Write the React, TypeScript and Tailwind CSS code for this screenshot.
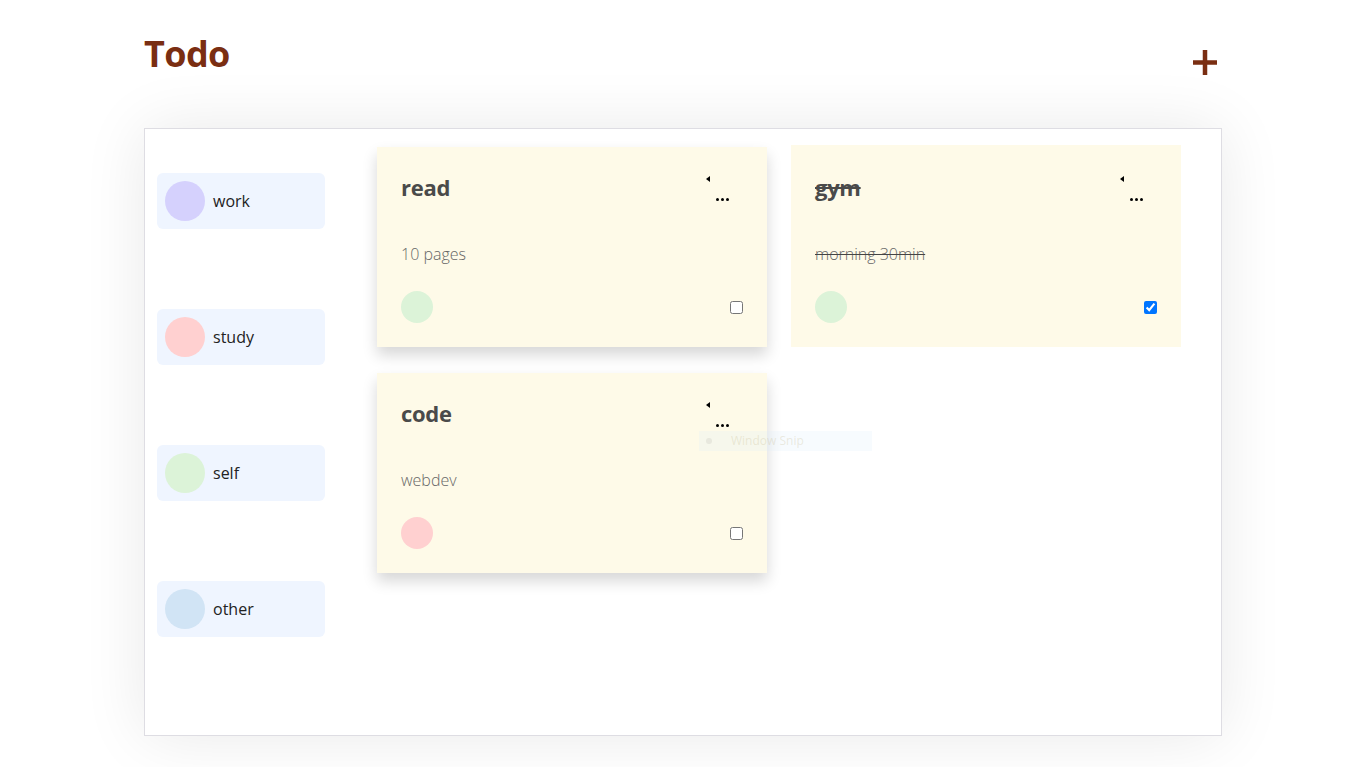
const categories = [
  { name: "work", color: "bg-[#d5d1fd]" },
  { name: "study", color: "bg-[#ffd0d0]" },
  { name: "self", color: "bg-[#dcf3d8]" },
  { name: "other", color: "bg-[#d1e4f5]" },
];

const todos = [
  { title: "read", desc: "10 pages", color: "bg-[#dcf3d8]", done: false, shadow: true },
  { title: "gym", desc: "morning 30min", color: "bg-[#dcf3d8]", done: true, shadow: false },
  { title: "code", desc: "webdev", color: "bg-[#ffd0d0]", done: false, shadow: true },
];

const PlusIcon = () => (
  <svg width="24" height="25" viewBox="0 0 24 25">
    <rect x="0" y="10.25" width="24" height="4.5" fill="#7a2e12" />
    <rect x="9.75" y="0" width="4.5" height="25" fill="#7a2e12" />
  </svg>
);

const MenuToggle = () => (
  <div className="relative w-[30px] h-[30px]">
    <span className="absolute left-[1px] top-[5px] w-0 h-0 border-y-[3.5px] border-y-transparent border-r-[4px] border-r-black" />
    <span className="absolute left-[11px] top-[27px] flex gap-[2.5px]">
      <span className="w-[2.5px] h-[2.5px] rounded-full bg-black" />
      <span className="w-[2.5px] h-[2.5px] rounded-full bg-black" />
      <span className="w-[2.5px] h-[2.5px] rounded-full bg-black" />
    </span>
  </div>
);

const TodoCard = ({ todo, index }: { todo: (typeof todos)[number]; index: number }) => {
  const isTall = index === 1;
  return (
    <div
      className={`w-[390px] bg-[#fefae8] px-6 flex flex-col ${
        isTall ? "h-[202px] pt-[26px]" : "h-[200px] mt-[2px] pt-6"
      } ${todo.shadow ? "shadow-[0_8px_14px_rgba(0,0,0,0.16)]" : ""}`}
    >
      <div className="flex justify-between items-start h-8">
        <h3
          className={`text-[22px] leading-8 font-bold text-[#4a4a4a] tracking-[-0.3px] ${
            todo.done ? "line-through" : ""
          }`}
        >
          {todo.title}
        </h3>
        <div className="mr-[8px]">
          <MenuToggle />
        </div>
      </div>
      <p
        className={`mt-[39px] text-base leading-6 font-light text-[#666] ${
          todo.done ? "line-through decoration-[#444]" : ""
        }`}
      >
        {todo.desc}
      </p>
      <div className="mt-[25px] flex items-center justify-between">
        <div className={`w-8 h-8 rounded-full ${todo.color}`} />
        <input
          type="checkbox"
          readOnly
          checked={todo.done}
          className="w-[13px] h-[13px] m-0"
        />
      </div>
    </div>
  );
};

const App = () => {
  return (
    <div
      className="min-h-[767px] bg-white"
      style={{ fontFamily: '"Open Sans", "Noto Sans", sans-serif' }}
    >
      <div className="w-[1078px] mx-auto">
        <header className="flex justify-between items-start pt-[36px] h-[128px]">
          <h1 className="text-[36px] leading-[36px] font-bold text-[#7a2e12] tracking-[-0.6px]">Todo</h1>
          <div className="mt-[14px] mr-[5px]">
            <PlusIcon />
          </div>
        </header>

        <div className="relative h-[608px] border border-[#dedde3] bg-white shadow-[0_0_60px_rgba(0,0,0,0.09)] flex">
          <aside className="w-[168px] ml-3 mt-[44px] flex flex-col gap-20">
            {categories.map((cat) => (
              <div
                key={cat.name}
                className="h-14 rounded-md bg-[#eff5ff] flex items-center gap-2 px-2"
              >
                <div className={`w-10 h-10 rounded-full ${cat.color}`} />
                <span className="text-base text-[#222]">{cat.name}</span>
              </div>
            ))}
          </aside>

          <main className="ml-[52px] mt-4 grid grid-cols-[390px_390px] gap-6 content-start items-start">
            {todos.map((todo, i) => (
              <TodoCard key={todo.title} todo={todo} index={i} />
            ))}
          </main>

          <div className="absolute left-[554px] top-[302px] w-[173px] h-[20px] bg-[rgba(220,238,252,0.22)] flex items-center">
            <span className="ml-[7px] w-[6px] h-[6px] rounded-full bg-[rgba(200,200,190,0.3)]" />
            <span className="ml-[19px] text-[12px] text-[rgba(200,190,150,0.3)]">Window Snip</span>
          </div>
        </div>
      </div>
    </div>
  );
};

export default App;
